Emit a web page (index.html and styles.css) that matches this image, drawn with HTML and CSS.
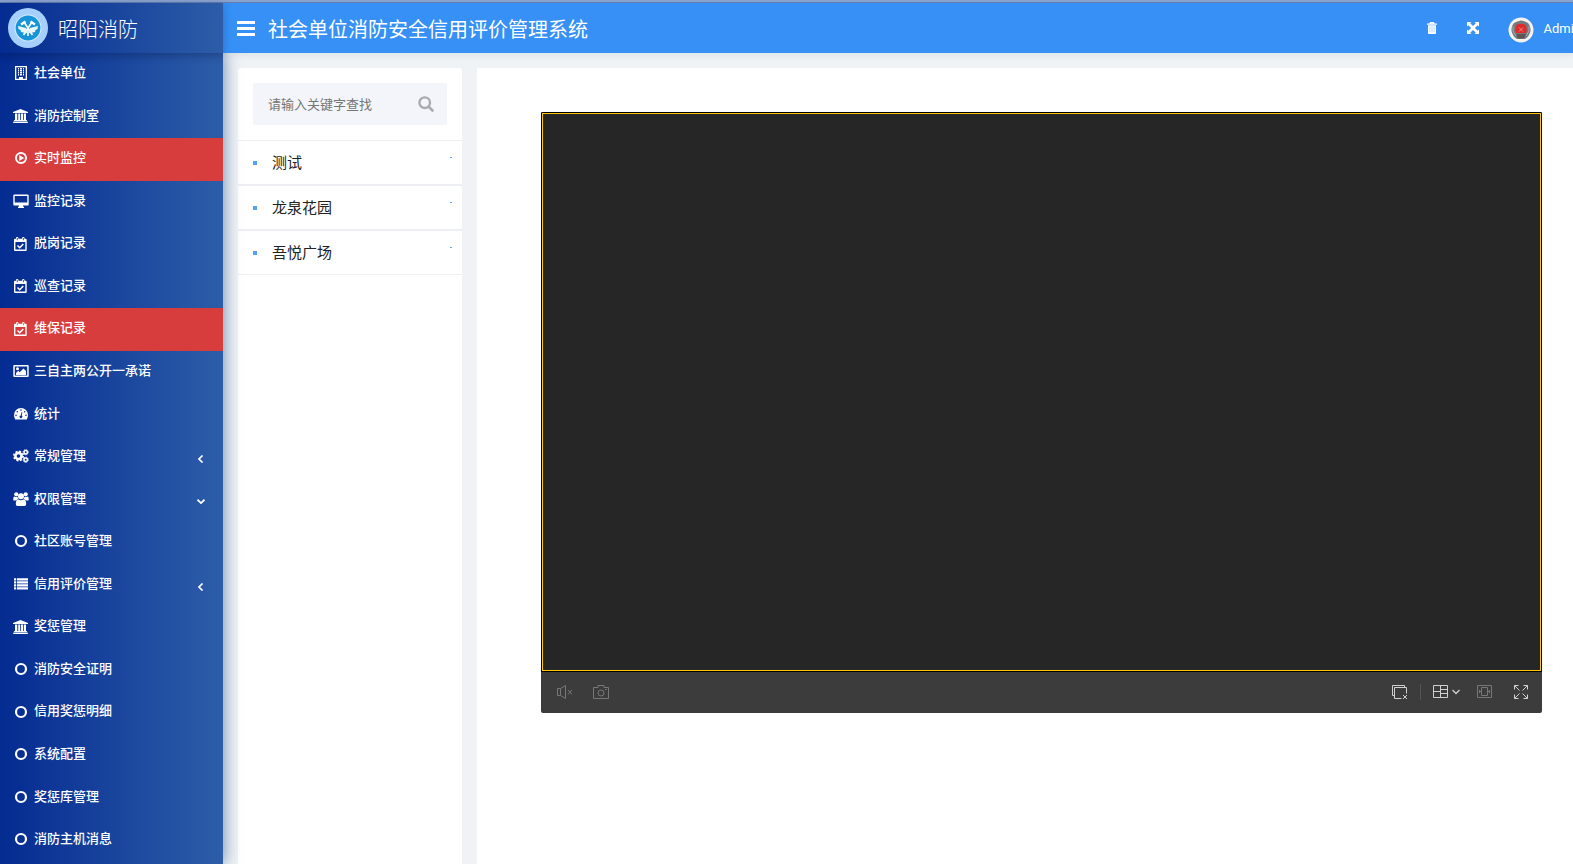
FILE: index.html
```html
<!DOCTYPE html>
<html lang="zh-CN">
<head>
<meta charset="utf-8">
<title>社会单位消防安全信用评价管理系统</title>
<link rel="stylesheet" href="styles.css">
</head>
<body>
<svg class="sprite" aria-hidden="true">
  <symbol id="building" viewBox="0 0 16 14"><path fill-rule="evenodd" d="M2 0h12v14H2zM3.300 1.200v11.600H6V11h4v1.800h2.700V1.200z"/><path d="M5 2h1v1.500H5zM7 2h2v1.500H7zM10 2h1v1.500h-1zM5 4h1v1.500H5zM7 4h2v1.500H7zM10 4h1v1.500h-1zM5 6h1v1.500H5zM7 6h2v1.500H7zM10 6h1v1.500h-1zM5 8h1v1.500H5zM7 8h2v1.500H7zM10 8h1v1.500h-1z"/></symbol>
  <symbol id="bank" viewBox="0 0 16 14"><path d="M7.500 0L15 3v1H0V3zM2 4.500h2.300V11h.9V4.500h2V11h.8V4.500h2V11h.8V4.500H13V11h.7l.5 1H.8l.5-1H2zM.5 12.400h14L15 14H0z"/></symbol>
  <symbol id="play" viewBox="0 0 16 14"><circle cx="8" cy="7" r="5" fill="none" stroke="currentColor" stroke-width="2"/><path d="M6.200 4l5 3-5 3z"/></symbol>
  <symbol id="desktop" viewBox="0 0 16 14"><path fill-rule="evenodd" d="M1.300 0.500h13.400q1 0 1 1v9q0 1-1 1H10l.5 1.500h.5v1H5v-1h.5L6 11.500H1.300q-1 0-1-1v-9q0-1 1-1zM1.700 1.900v6.700h12.600V1.900z"/></symbol>
  <symbol id="calendar" viewBox="0 0 16 14"><path fill-rule="evenodd" d="M2 1.800h1V1q0-1 1.200-1T5.400 1v.8h3.700V1q0-1 1.200-1T11.500 1v.8h1.200q1 0 1 1V13q0 1-1 1H2q-1 0-1-1V2.800q0-1 1-1zM2.400 5v7.600h9.900V5zM3.800 1v2.200h.8V1zM9.900 1v2.200h.8V1z"/><path d="M4.500 8.500l2.200 2.200 3.600-3.800" fill="none" stroke="currentColor" stroke-width="1.500"/></symbol>
  <symbol id="image" viewBox="0 0 16 14"><path fill-rule="evenodd" d="M1.300 1h13.400q1 0 1 1v10q0 1-1 1H1.300q-1 0-1-1V2q0-1 1-1zM1.800 2.400v9.200h12.400V2.400z"/><circle cx="4.500" cy="4.700" r="1.500"/><path d="M3 11V9l2.200-2.200 1.500 1.500L10.500 4.500 13 7v4z"/></symbol>
  <symbol id="gauge" viewBox="0 0 16 14"><path fill-rule="evenodd" d="M8 1a7 7 0 0 1 7 7q0 2.600-1.200 4.500H2.200Q1 10.600 1 8a7 7 0 0 1 7-7zM8 2.300a.8.8 0 1 0 0 1.600.8.8 0 0 0 0-1.600zM4.300 3.900a.8.8 0 1 0 0 1.600.8.8 0 0 0 0-1.600zM11.700 3.900a.8.8 0 1 0 0 1.600.8.8 0 0 0 0-1.600zM3 7.500a.8.8 0 1 0 0 1.600.8.8 0 0 0 0-1.600zM13 7.500a.8.8 0 1 0 0 1.600.8.8 0 0 0 0-1.600zM8.600 5l-.8 3.400a1.400 1.400 0 1 0 .9.200L9.400 5.200z"/></symbol>
  <symbol id="cogs" viewBox="0 0 16 14"><g fill="none" stroke="currentColor"><circle cx="5.500" cy="7" r="3.100" stroke-width="2.600"/><circle cx="5.500" cy="7" r="4.700" stroke-width="1.500" stroke-dasharray="2 1.691"/><circle cx="12.700" cy="3.200" r="1.700" stroke-width="1.500"/><circle cx="12.700" cy="3.200" r="2.600" stroke-width=".9" stroke-dasharray="1.200 .842"/><circle cx="12.700" cy="10.800" r="1.700" stroke-width="1.500"/><circle cx="12.700" cy="10.800" r="2.600" stroke-width=".9" stroke-dasharray="1.200 .842"/></g></symbol>
  <symbol id="users" viewBox="0 0 16 14"><circle cx="3.300" cy="2.300" r="2.100"/><circle cx="12.700" cy="2.300" r="2.100"/><circle cx="8" cy="4.300" r="3"/><path d="M.3 8V6.500Q.3 4.500 1.500 4.500q2 1 3 .3.200 1.500 1 2.200-1.500 0-2.300 1.500H1.500Q.3 8.500.3 8zM15.700 8V6.500q0-2-1.200-2-2 1-3 .3-.2 1.500-1 2.200 1.500 0 2.300 1.500h1.700q1.200 0 1.200-.5zM2.800 12q0-4.600 2.700-4.600Q8 9 10.500 7.400q2.700 0 2.700 4.600 0 2-1.700 2h-7q-1.700 0-1.700-2z"/></symbol>
  <symbol id="ring" viewBox="0 0 16 14"><circle cx="8" cy="7" r="5" fill="none" stroke="currentColor" stroke-width="2.200"/></symbol>
  <symbol id="list" viewBox="0 0 16 14"><path d="M1 1.200h2.200v2.300H1zM4 1.200h11v2.300H4zM1 4.200h2.200v2.300H1zM4 4.200h11v2.300H4zM1 7.200h2.200v2.300H1zM4 7.200h11v2.300H4zM1 10.200h2.200v2.300H1zM4 10.200h11v2.300H4z"/></symbol>
  <symbol id="angle-left" viewBox="0 0 8 8"><path d="M5.500 .5L2 4l3.500 3.500" fill="none" stroke="currentColor" stroke-width="1.700"/></symbol>
  <symbol id="angle-down" viewBox="0 0 8 8"><path d="M.5 1.700L4 5l3.500-3.300" fill="none" stroke="currentColor" stroke-width="1.700"/></symbol>
</svg>

<div class="strip"></div>
<header class="topbar">
  <a class="brand" href="#">
    <svg class="brand-logo" viewBox="0 0 40 40" aria-hidden="true">
      <circle cx="20" cy="20" r="20" fill="#a6d0fb"/>
      <circle cx="20" cy="20" r="13.500" fill="#d5e9f7"/>
      <circle cx="20" cy="20" r="12.400" fill="#1694d8"/>
      <g fill="none" stroke="#fff"><path d="M16 14l8.500 13M24 14l-8.500 13" stroke-width="1.600"/><path d="M13 16.500l4.500-3M22.500 13.500l4.500 3" stroke-width="2.500"/><path d="M20 19v9" stroke-width="1.600"/></g>
      <path d="M10 18l8 2 1.500 4.500-3 1.500-1-1.500-2.500-.5-.5-2-2-1zM30 18l-8 2-1.500 4.500 3 1.500 1-1.500 2.500-.5.500-2 2-1z" fill="#e8f5fc"/>
    </svg>
    <span>昭阳消防</span>
  </a>
  <button class="menu-toggle" type="button" aria-label="切换菜单">
    <svg viewBox="0 0 18 16" aria-hidden="true"><path d="M0 1h18v3H0zM0 7h18v3H0zM0 13h18v3H0z"/></svg>
  </button>
  <h1 class="title">社会单位消防安全信用评价管理系统</h1>
  <div class="tools">
    <button type="button" aria-label="清除缓存">
      <svg viewBox="0 0 12 12" aria-hidden="true"><path d="M4 0h4l.6 1.500H11v1.300H1V1.500h2.400zM2 3.300h8V11q0 1-1 1H3q-1 0-1-1z"/><path d="M4 4.500v6M6 4.500v6M8 4.500v6" stroke="#9bcbfb" stroke-width=".7"/></svg>
    </button>
    <button type="button" aria-label="全屏">
      <svg viewBox="0 0 12 12" aria-hidden="true"><path d="M0 0h4.500L3.200 1.300 6 4.100l2.800-2.800L7.500 0H12v4.500l-1.300-1.300L7.900 6l2.800 2.800L12 7.500V12H7.500l1.300-1.300L6 7.900l-2.800 2.800L4.500 12H0V7.500l1.300 1.300L4.100 6 1.300 3.200 0 4.500z"/></svg>
    </button>
    <a class="account" href="#">
      <svg viewBox="0 0 26 26" aria-hidden="true"><circle cx="13" cy="13" r="12.500" fill="#f5f2f0"/><path d="M13 3.500q4 .5 7 2.500 3 3 2.500 8-1 5-5.500 8H9q-4.500-3-5.500-8Q3 9 6 6q3-2 7-2.500z" fill="#77797d"/><path d="M8.500 8q2-1.500 4.500-1 2.500-.5 4.500 1 2 4 .5 8H8q-1.500-4 .5-8z" fill="#e02a2c"/><path d="M11 10.500l4 4m0-4l-4 4" stroke="#f08a84"/><path d="M5 9v5l3 5M21 9v5l-3 5" fill="none" stroke="#a9a9ad"/><path d="M8 17h10l-2 4.500h-6z" fill="#5c5658"/></svg>
      <span>Admin</span>
    </a>
  </div>
</header>

<div class="layout">
  <nav class="sidebar">
    <ul>
      <li><a href="#"><svg class="icon"><use href="#building"/></svg><span>社会单位</span></a></li>
      <li><a href="#"><svg class="icon"><use href="#bank"/></svg><span>消防控制室</span></a></li>
      <li><a class="active" href="#"><svg class="icon"><use href="#play"/></svg><span>实时监控</span></a></li>
      <li><a href="#"><svg class="icon"><use href="#desktop"/></svg><span>监控记录</span></a></li>
      <li><a href="#"><svg class="icon"><use href="#calendar"/></svg><span>脱岗记录</span></a></li>
      <li><a href="#"><svg class="icon"><use href="#calendar"/></svg><span>巡查记录</span></a></li>
      <li><a class="active" href="#"><svg class="icon"><use href="#calendar"/></svg><span>维保记录</span></a></li>
      <li><a href="#"><svg class="icon"><use href="#image"/></svg><span>三自主两公开一承诺</span></a></li>
      <li><a href="#"><svg class="icon"><use href="#gauge"/></svg><span>统计</span></a></li>
      <li><a href="#"><svg class="icon"><use href="#cogs"/></svg><span>常规管理</span><svg class="caret"><use href="#angle-left"/></svg></a></li>
      <li><a href="#"><svg class="icon"><use href="#users"/></svg><span>权限管理</span><svg class="caret"><use href="#angle-down"/></svg></a></li>
      <li><a href="#"><svg class="icon"><use href="#ring"/></svg><span>社区账号管理</span></a></li>
      <li><a href="#"><svg class="icon"><use href="#list"/></svg><span>信用评价管理</span><svg class="caret"><use href="#angle-left"/></svg></a></li>
      <li><a href="#"><svg class="icon"><use href="#bank"/></svg><span>奖惩管理</span></a></li>
      <li><a href="#"><svg class="icon"><use href="#ring"/></svg><span>消防安全证明</span></a></li>
      <li><a href="#"><svg class="icon"><use href="#ring"/></svg><span>信用奖惩明细</span></a></li>
      <li><a href="#"><svg class="icon"><use href="#ring"/></svg><span>系统配置</span></a></li>
      <li><a href="#"><svg class="icon"><use href="#ring"/></svg><span>奖惩库管理</span></a></li>
      <li><a href="#"><svg class="icon"><use href="#ring"/></svg><span>消防主机消息</span></a></li>
    </ul>
  </nav>

  <div class="content">
    <aside class="units">
      <form class="search">
        <input type="text" placeholder="请输入关键字查找" aria-label="关键字">
        <button type="submit" aria-label="查找">
          <svg viewBox="0 0 16 16" aria-hidden="true"><circle cx="6.700" cy="6.700" r="5.300" fill="none" stroke="currentColor" stroke-width="2.400"/><path d="M10.500 10.500l4 4" stroke="currentColor" stroke-width="2.600" stroke-linecap="round"/></svg>
        </button>
      </form>
      <ul class="unit-list">
        <li><a href="#">测试</a></li>
        <li><a href="#">龙泉花园</a></li>
        <li><a href="#">吾悦广场</a></li>
      </ul>
    </aside>

    <main class="monitor">
      <section class="player">
        <div class="screen"></div>
        <div class="controls">
          <button class="dim" type="button" aria-label="静音"><svg viewBox="0 0 16 16"><path d="M.5 4.500h3v7h-3zM3.500 4.500l5-3v13l-5-3M11 6l4 4.500M15 6l-4 4.500"/></svg></button>
          <button class="dim" type="button" aria-label="截图"><svg viewBox="0 0 16 16"><path d="M.5 3.500H5v-2h6v2h4.500v11H.5z"/><circle cx="8" cy="9" r="3"/><path d="M12 5.500h1.500"/></svg></button>
          <span class="spacer"></span>
          <button type="button" aria-label="全部关闭"><svg viewBox="0 0 16 16"><path d="M2.500 11.500h-2v-10h12v2M9.500 14.500h-7v-11h12v6M11 11l4 4M15 11l-4 4"/></svg></button>
          <span class="divider"></span>
          <button class="wide" type="button" aria-label="窗口分割"><svg viewBox="0 0 16 16"><path d="M.5 1.500h14v12H.5zM7.500 1.500v12M.5 7.500h7M7.500 5.500h7M7.500 9.500h7"/></svg><svg class="chevron" viewBox="0 0 8 16"><path d="M.5 6L4 9.500 7.500 6" stroke-width="1.300"/></svg></button>
          <button class="dim" type="button" aria-label="原始比例"><svg viewBox="0 0 16 16"><path d="M.5 1.500h14v12H.5zM4.500 3.500h6v8h-6zM2 7.500h2.500M10.500 7.500H13M2.500 6v3M12.500 6v3"/></svg></button>
          <button type="button" aria-label="全屏播放"><svg viewBox="0 0 16 16"><path d="M1.500 5.500v-4h4M1.500 1.500l5 5M10.500 1.500h4v4M14.500 1.500l-5 5M1.500 10.500v4h4M1.500 14.500l5-5M14.500 10.500v4h-4M14.500 14.500l-5-5"/></svg></button>
        </div>
      </section>
    </main>
  </div>
</div>
</body>
</html>
```
FILE: styles.css
```css
* {
  box-sizing: border-box;
}

body {
  margin: 0;
  min-height: 100vh;
  display: flex;
  flex-direction: column;
  overflow: hidden;
  background: #eff3f6;
  color: #222;
  font-family: Roboto, "Noto Sans CJK SC", sans-serif;
  font-size: 13px;
}

ul {
  margin: 0;
  padding: 0;
  list-style: none;
}

a {
  color: inherit;
  text-decoration: none;
}

button {
  padding: 0;
  border: 0;
  background: none;
  color: inherit;
}

svg {
  display: block;
  flex: none;
  fill: currentColor;
}

.sprite {
  display: none;
}

.strip {
  height: 3px;
  background: #8ba5d2;
  border-bottom: 1px solid #6580b3;
}

.topbar {
  position: relative;
  z-index: 2;
  display: flex;
  align-items: center;
  height: 50px;
  background: #3690f5;
  color: #fff;
  box-shadow: 0 2px 8px rgba(0, 21, 41, 0.08);
}

.brand {
  display: flex;
  flex: none;
  align-items: center;
  gap: 10px;
  width: 223px;
  height: 50px;
  padding-left: 8px;
  background: linear-gradient(to right, #042b91, #2d5da8);
  box-shadow: 0 2px 8px rgba(0, 10, 50, 0.25);
  font-size: 20px;
  font-weight: 300;
}

.brand-logo {
  width: 40px;
  height: 40px;
}

.menu-toggle {
  margin-left: 14px;
}

.menu-toggle svg {
  width: 18px;
  height: 16px;
}

.title {
  margin: 0 0 0 13px;
  font-size: 20px;
  font-weight: 400;
  white-space: nowrap;
}

.tools {
  display: flex;
  flex: none;
  align-items: center;
  gap: 29px;
  margin-left: auto;
  margin-right: -8px;
}

.tools button svg {
  width: 12px;
  height: 12px;
}

.account {
  display: flex;
  align-items: center;
  gap: 9px;
}

.account svg {
  width: 26px;
  height: 26px;
  margin-top: 4px;
}

.layout {
  display: flex;
  flex: 1;
}

.sidebar {
  position: relative;
  z-index: 1;
  flex: none;
  width: 223px;
  background: linear-gradient(to right, #042b91, #2d5da8);
  box-shadow: 2px 0 14px rgba(20, 60, 120, 0.5);
  color: #fff;
  font-weight: 500;
}

.sidebar a {
  display: flex;
  align-items: center;
  gap: 5px;
  padding: 11px 15px 13px 13px;
  line-height: 1.42857;
}

.sidebar .active {
  background: #d83d3d;
}

.icon {
  width: 16px;
  height: 14px;
}

.caret {
  width: 8px;
  height: 8px;
  margin: 6px 3px 0 auto;
}

.content {
  display: flex;
  flex: 1;
  gap: 15px;
  padding: 15px 0 0 15px;
}

.units {
  flex: none;
  width: 224px;
  border-radius: 3px 3px 0 0;
  background: #fff;
}

.search {
  display: flex;
  height: 42px;
  margin: 15px;
  border-radius: 2px;
  background: #f4f5fb;
}

.search input {
  flex: 1;
  min-width: 0;
  padding: 0 0 0 15px;
  border: 0;
  outline: 0;
  background: none;
  font: inherit;
}

.search input::placeholder {
  color: #757575;
}

.search button {
  width: 43px;
  color: #a9abb0;
}

.search svg {
  width: 16px;
  height: 16px;
  margin: 0 auto;
}

.unit-list li {
  border: 1px solid #eeeff5;
  border-width: 1px 0;
}

.unit-list a {
  display: flex;
  align-items: center;
  height: 43px;
  padding: 0 10px 2px 15px;
  font-size: 15px;
}

.unit-list a::before {
  content: "";
  width: 4px;
  height: 4px;
  margin: 2px 15px 0 0;
  background: #57a0f5;
}

.unit-list a::after {
  content: "";
  width: 2px;
  height: 1px;
  margin: 0 0 8px auto;
  background: #57a0f5;
}

.monitor {
  flex: 1;
  padding: 44px 31px 0 64px;
  background: #fff;
}

.player {
  border-radius: 2px;
  background: #3c3c3c;
  overflow: hidden;
}

.screen {
  aspect-ratio: 1001 / 560;
  border: 1px solid #000;
  background: #262626;
  box-shadow: inset 0 0 0 1px #ffc800;
}

.controls {
  display: flex;
  align-items: center;
  height: 41px;
  padding: 0 13px 2px 16px;
  gap: 20px;
  color: #d0d0d0;
}

.controls svg {
  width: 16px;
  height: 16px;
  fill: none;
  stroke: currentColor;
}

.controls .dim {
  color: #777;
}

.controls .wide {
  display: flex;
  gap: 3px;
  margin-right: -3px;
}

.controls .chevron {
  width: 8px;
}

.spacer {
  flex: 1;
}

.divider {
  width: 1px;
  height: 16px;
  margin: 0 -8px;
  background: #555;
}
```
